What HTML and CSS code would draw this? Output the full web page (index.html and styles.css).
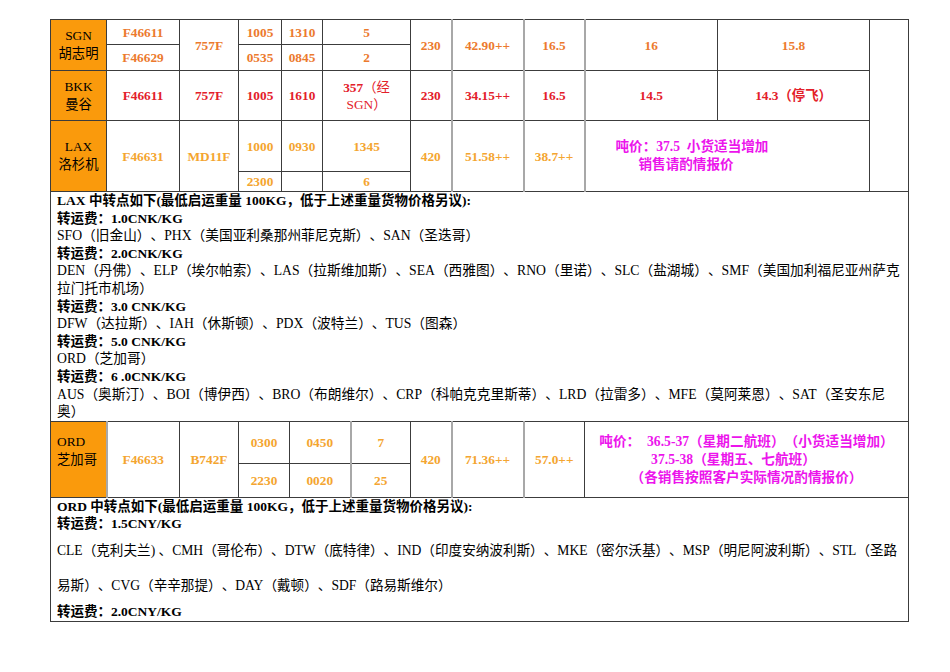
FILE: index.html
```html
<!DOCTYPE html>
<html lang="zh-CN">
<head>
<meta charset="utf-8">
<title>航班运价表</title>
<link rel="stylesheet" href="styles.css">
</head>
<body>
<div class="sheet">
<table class="grid">
<colgroup>
<col class="w56"><col class="w73"><col class="w59"><col class="w43"><col class="w41"><col class="w88"><col class="w41"><col class="w72"><col class="w61"><col class="w133"><col class="w152"><col class="w39">
</colgroup>
<tr class="h25">
<td rowspan="2" class="city">SGN<br>胡志明</td>
<td class="o">F46611</td>
<td rowspan="2" class="o">757F</td>
<td class="o">1005</td>
<td class="o">1310</td>
<td class="o">5</td>
<td rowspan="2" class="o">230</td>
<td rowspan="2" class="o soft">42.90++</td>
<td rowspan="2" class="o soft">16.5</td>
<td rowspan="2" class="o soft">16</td>
<td rowspan="2" class="o">15.8</td>
<td rowspan="5" class="blank"></td>
</tr>
<tr class="h26">
<td class="o">F46629</td>
<td class="o">0535</td>
<td class="o">0845</td>
<td class="o">2</td>
</tr>
<tr class="h50">
<td class="city">BKK<br>曼谷</td>
<td class="r">F46611</td>
<td class="r">757F</td>
<td class="r">1005</td>
<td class="r">1610</td>
<td class="r">357<span class="thin">（经<br>SGN）</span></td>
<td class="r">230</td>
<td class="r soft">34.15++</td>
<td class="r soft">16.5</td>
<td class="r soft">14.5</td>
<td class="r">14.3（停飞）</td>
</tr>
<tr class="h51">
<td rowspan="2" class="city">LAX<br>洛杉机</td>
<td rowspan="2" class="g">F46631</td>
<td rowspan="2" class="g">MD11F</td>
<td class="g">1000</td>
<td class="g">0930</td>
<td class="g">1345</td>
<td rowspan="2" class="g">420</td>
<td rowspan="2" class="g soft">51.58++</td>
<td rowspan="2" class="g soft">38.7++</td>
<td rowspan="2" colspan="2" class="m lax-note soft"><div class="l1">吨价：37.5&nbsp; 小货适当增加</div><div class="l2">销售请酌情报价</div></td>
</tr>
<tr class="h20">
<td class="g">2300</td>
<td></td>
<td class="g">6</td>
</tr>
<tr>
<td colspan="12" class="notes">
<div class="b">LAX 中转点如下(最低启运重量 100KG，低于上述重量货物价格另议):</div>
<div class="b">转运费：1.0CNK/KG</div>
<div>SFO（旧金山）、PHX（美国亚利桑那州菲尼克斯）、SAN（圣迭哥）</div>
<div class="b">转运费：2.0CNK/KG</div>
<div class="nw">DEN（丹佛）、ELP（埃尔帕索）、LAS（拉斯维加斯）、SEA（西雅图）、RNO（里诺）、SLC（盐湖城）、SMF（美国加利福尼亚州萨克<br>拉门托市机场）</div>
<div class="b">转运费：3.0 CNK/KG</div>
<div>DFW（达拉斯）、IAH（休斯顿）、PDX（波特兰）、TUS（图森）</div>
<div class="b">转运费：5.0 CNK/KG</div>
<div>ORD（芝加哥）</div>
<div class="b">转运费：6 .0CNK/KG</div>
<div class="nw">AUS（奥斯汀）、BOI（博伊西）、BRO（布朗维尔）、CRP（科帕克克里斯蒂）、LRD（拉雷多）、MFE（莫阿莱恩）、SAT（圣安东尼<br>奥）</div>
</td>
</tr>
</table>

<table class="grid">
<colgroup>
<col class="w56"><col class="w73"><col class="w59"><col class="w51"><col class="w61"><col class="w60"><col class="w41"><col class="w72"><col class="w61"><col class="w324">
</colgroup>
<tr class="h42">
<td rowspan="2" class="city lefty">ORD<br>芝加哥</td>
<td rowspan="2" class="g soft">F46633</td>
<td rowspan="2" class="g">B742F</td>
<td class="g">0300</td>
<td class="g">0450</td>
<td class="g soft">7</td>
<td rowspan="2" class="g">420</td>
<td rowspan="2" class="g soft">71.36++</td>
<td rowspan="2" class="g soft">57.0++</td>
<td rowspan="2" class="m ord-note">
<div>吨价：&nbsp; 36.5-37（星期二航班）（小货适当增加）</div>
<div class="mid">37.5-38（星期五、七航班）</div>
<div>（各销售按照客户实际情况酌情报价）</div>
</td>
</tr>
<tr class="h34">
<td class="g">2230</td>
<td class="g">0020</td>
<td class="g soft">25</td>
</tr>
<tr>
<td colspan="10" class="notes">
<div class="b">ORD 中转点如下(最低启运重量 100KG，低于上述重量货物价格另议):</div>
<div class="b">转运费：1.5CNY/KG</div>
<div class="tall nw">CLE（克利夫兰) 、CMH（哥伦布）、DTW（底特律）、IND（印度安纳波利斯）、MKE（密尔沃基）、MSP（明尼阿波利斯）、STL（圣路<br>易斯）、CVG（辛辛那提）、DAY（戴顿）、SDF（路易斯维尔）</div>
<div class="b">转运费：2.0CNY/KG</div>
</td>
</tr>
</table>
</div>
</body>
</html>
```
FILE: styles.css
```css
html, body {
  margin: 0;
  background: #ffffff;
}
body {
  padding: 19px 0 0 50px;
  font-family: "Liberation Serif", "Noto Sans CJK SC", serif;
  font-size: 13.33px;
  color: #000;
  text-spacing-trim: space-all;
}
.sheet {
  width: 859px;
}
.grid {
  border-collapse: collapse;
  table-layout: fixed;
  width: 859px;
}
.grid + .grid {
  margin-top: -1px;
}
.grid td {
  border: 1px solid #3c3c3c;
  padding: 0;
  text-align: center;
  vertical-align: middle;
  font-weight: bold;
  line-height: 17px;
  overflow: hidden;
}
.grid td.soft {
  border-left: 2px solid #a8a8a8;
}
.w56 { width: 56px; }
.w73 { width: 73px; }
.w59 { width: 59px; }
.w43 { width: 43px; }
.w41 { width: 41px; }
.w88 { width: 88px; }
.w72 { width: 72px; }
.w61 { width: 61px; }
.w133 { width: 133px; }
.w152 { width: 152px; }
.w39 { width: 39px; }
.w51 { width: 51px; }
.w60 { width: 60px; }
.w324 { width: 324px; }

.h25 { height: 25px; }
.h26 { height: 26px; }
.h50 { height: 50px; }
.h51 { height: 51px; }
.h20 { height: 20px; }
.h42 { height: 42px; }
.h34 { height: 34px; }

.grid td.city {
  background: #fa9a0c;
  color: #000;
  font-weight: normal;
  line-height: 18px;
}
.grid td.city.lefty {
  text-align: left;
  padding: 0 0 16px 6px;
}
.o { color: #ec7a2e; }
.r { color: #e3202a; }
.g { color: #f4a530; }
.m { color: #ec14ec; }
.thin { font-weight: normal; }

.grid td.lax-note {
  text-align: left;
  line-height: 18px;
  font-size: 13.6px;
}
.lax-note .l1 { padding-left: 30px; }
.lax-note .l2 { padding-left: 53px; }

.grid td.ord-note {
  line-height: 18px;
  font-size: 13.65px;
  padding-top: 2px;
}
.ord-note .mid {
  padding-right: 26px;
}

.grid td.notes {
  text-align: left;
  font-weight: normal;
  font-size: 13.7px;
  line-height: 17.6px;
  padding: 0 6px;
  vertical-align: top;
}
.notes .b {
  font-weight: bold;
  font-size: 13.5px;
}
.notes .nw {
  white-space: nowrap;
}
.notes .tall {
  line-height: 35px;
  font-size: 13.6px;
}
.blank {
  background: #fff;
}
```
